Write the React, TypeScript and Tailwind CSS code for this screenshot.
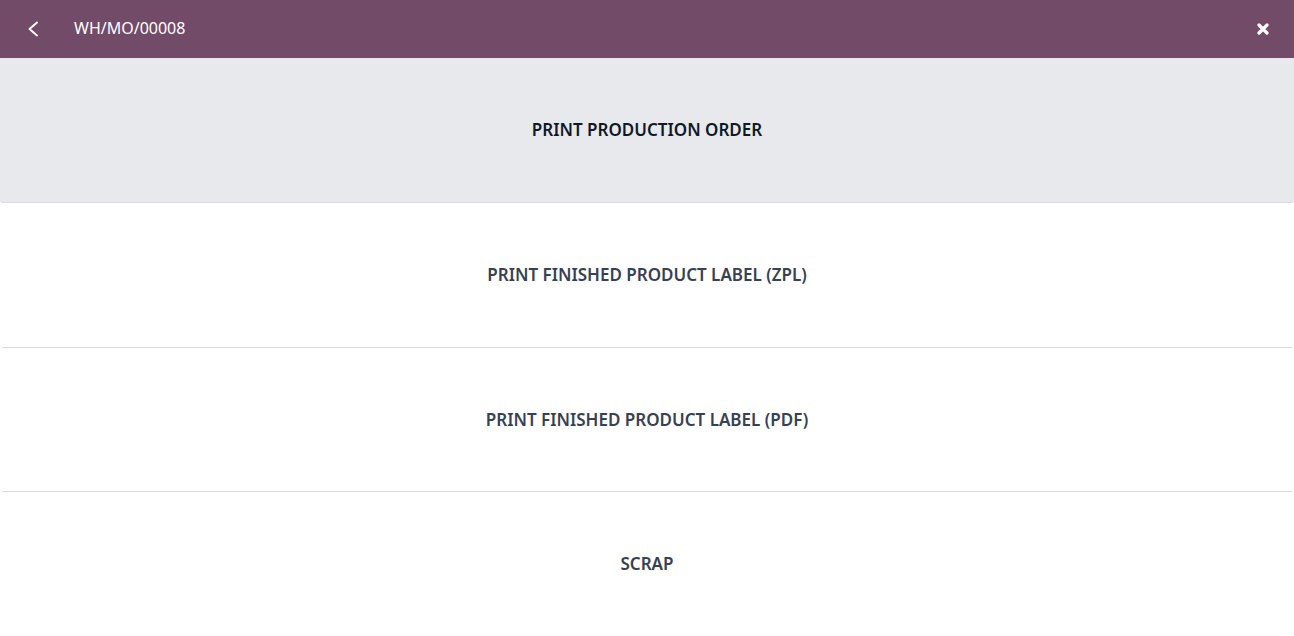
const actions = [
  { label: 'PRINT PRODUCTION ORDER', active: true },
  { label: 'PRINT FINISHED PRODUCT LABEL (ZPL)', active: false },
  { label: 'PRINT FINISHED PRODUCT LABEL (PDF)', active: false },
  { label: 'SCRAP', active: false },
];

export default function App() {
  return (
    <div className="w-[1294px] h-[636px] overflow-hidden bg-white" style={{ fontFamily: '"Noto Sans", "Open Sans", sans-serif' }}>
      <header className="h-[58px] bg-[#714b67] flex items-center text-white">
        <button className="w-[66px] h-full flex items-center pl-[27px]">
          <svg width="12" height="16" viewBox="0 0 12 16" fill="none">
            <path d="M10 1.5 L2.5 8 L10 14.5" stroke="white" strokeWidth="1.9" strokeLinecap="round" strokeLinejoin="round" />
          </svg>
        </button>
        <span className="text-[16px] leading-none ml-[8px] -mt-[2px]">WH/MO/00008</span>
        <div className="flex-1" />
        <button className="w-[62px] h-full flex items-center justify-center">
          <svg width="12" height="12" viewBox="0 0 12 12">
            <path d="M2 2 L10 10 M10 2 L2 10" stroke="white" strokeWidth="3.2" strokeLinecap="round" />
          </svg>
        </button>
      </header>

      <div className="flex flex-col">
        {actions.map(({ label, active }) => (
          <button
            key={label}
            className={
              active
                ? 'h-[145px] w-full bg-[#e7e9ed] border-b border-[#d8dadd] rounded-b-[3px] text-[#111827] text-[17px] font-semibold'
                : 'h-[144.5px] mx-[2px] border-b border-[#d8dadd] text-[#374151] text-[17px] font-semibold'
            }
          >
            {label}
          </button>
        ))}
      </div>
    </div>
  );
}
